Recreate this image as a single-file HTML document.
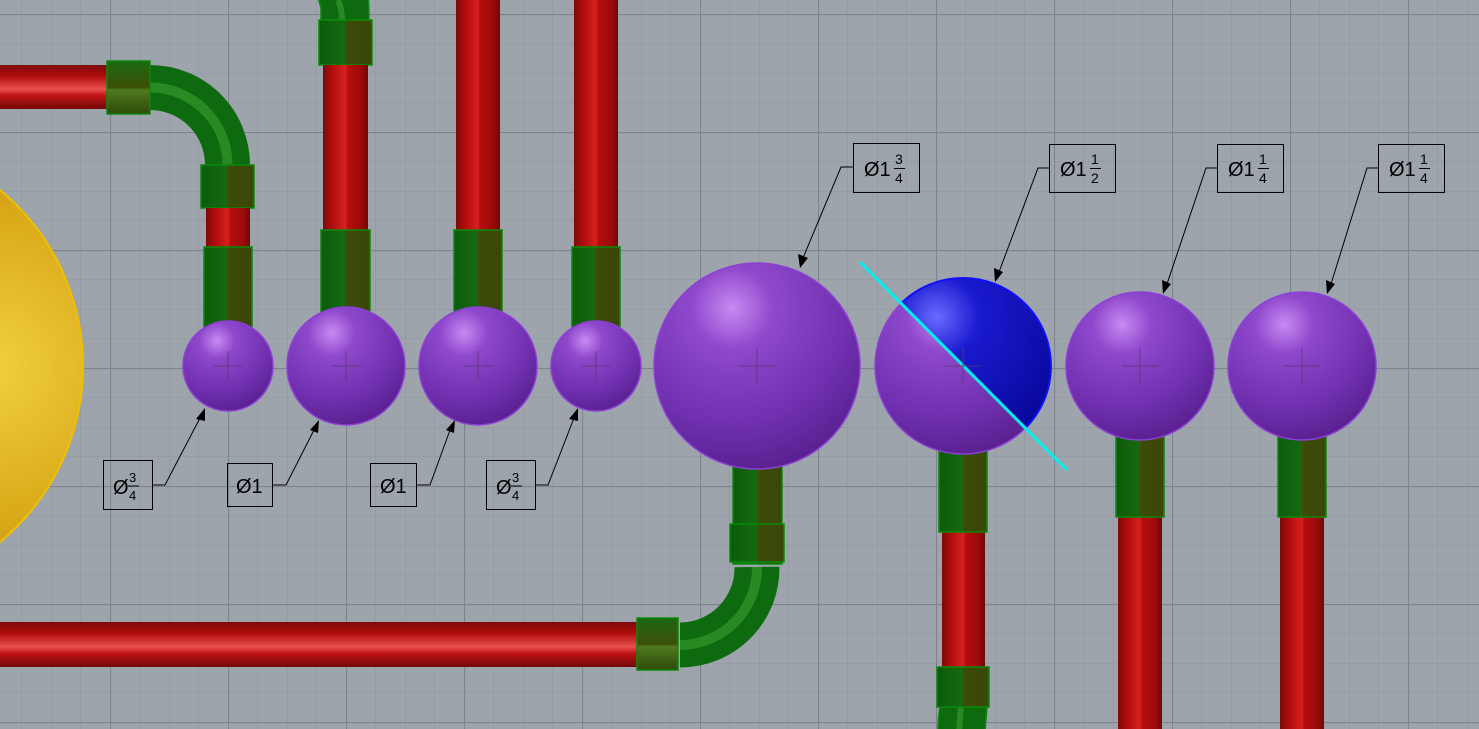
<!DOCTYPE html>
<html><head><meta charset="utf-8"><style>
html,body{margin:0;padding:0;background:#9ea4ac;overflow:hidden}
svg{display:block}
text{font-family:"Liberation Sans",sans-serif;fill:#000}
</style></head><body>
<svg width="1479" height="729" viewBox="0 0 1479 729" xmlns="http://www.w3.org/2000/svg">
<defs>
<pattern id="minor" width="29.5" height="29.5" patternUnits="userSpaceOnUse" x="-8" y="-15.5">
<path d="M0 0H29.5M0 0V29.5" stroke="#8f959e" stroke-width="1" fill="none"/></pattern>
<pattern id="major" width="118" height="118" patternUnits="userSpaceOnUse" x="-8" y="14">
<path d="M0 0.5H118M0.5 0V118" stroke="#7e848c" stroke-width="1.2" fill="none"/></pattern>
<linearGradient id="rv" x1="0" x2="1" y1="0" y2="0">
<stop offset="0" stop-color="#7c0a0a"/><stop offset="0.2" stop-color="#b00c0c"/><stop offset="0.5" stop-color="#d82020"/><stop offset="0.55" stop-color="#b50e0e"/><stop offset="0.85" stop-color="#9a0a0a"/><stop offset="1" stop-color="#700808"/></linearGradient>
<linearGradient id="rh" x1="0" x2="0" y1="0" y2="1">
<stop offset="0" stop-color="#7c0a0a"/><stop offset="0.25" stop-color="#b00c0c"/><stop offset="0.55" stop-color="#e85050"/><stop offset="0.7" stop-color="#c01414"/><stop offset="1" stop-color="#700808"/></linearGradient>
<linearGradient id="gv" x1="0" x2="1" y1="0" y2="0">
<stop offset="0" stop-color="#0c5a0c"/><stop offset="0.5" stop-color="#176a10"/><stop offset="0.5" stop-color="#3d4c08"/><stop offset="1" stop-color="#3a4608"/></linearGradient>
<linearGradient id="gh" x1="0" x2="0" y1="0" y2="1">
<stop offset="0" stop-color="#1a6a10"/><stop offset="0.5" stop-color="#3d5008"/><stop offset="0.55" stop-color="#4e7a20"/><stop offset="1" stop-color="#2e4a08"/></linearGradient>
<radialGradient id="pu" cx="0.38" cy="0.22" r="0.8">
<stop offset="0" stop-color="#c88af2"/><stop offset="0.25" stop-color="#8e48cc"/><stop offset="0.7" stop-color="#7030b0"/><stop offset="1" stop-color="#5a2090"/></radialGradient>
<radialGradient id="bl" cx="0.35" cy="0.22" r="0.8">
<stop offset="0" stop-color="#6a6aff"/><stop offset="0.3" stop-color="#1a1ad0"/><stop offset="1" stop-color="#08089a"/></radialGradient>
<radialGradient id="go" cx="0.8" cy="0.5" r="0.7">
<stop offset="0" stop-color="#f0d040"/><stop offset="0.5" stop-color="#d8a818"/><stop offset="1" stop-color="#9a7010"/></radialGradient>
<clipPath id="rightHalf"><polygon points="860,262 1067,470 1100,470 1100,250"/></clipPath>
</defs>
<rect width="1479" height="729" fill="#9ea4ac"/>
<rect width="1479" height="729" fill="url(#minor)"/>
<rect width="1479" height="729" fill="url(#major)"/>

<circle cx="-145" cy="366" r="228" fill="url(#go)" stroke="#f0c000" stroke-width="2"/>

<!-- top-left run -->
<rect x="0" y="65" width="108" height="44" fill="url(#rh)"/>
<path d="M150 87.5 A77.5 77.5 0 0 1 227.5 165" fill="none" stroke="#0e6a0e" stroke-width="45"/>
<path d="M150 87.5 A77.5 77.5 0 0 1 227.5 165" fill="none" stroke="#38a030" stroke-width="10" opacity="0.6"/>
<rect x="107" y="61" width="43" height="53" fill="url(#gh)" stroke="#0a8a0a" stroke-width="1.5"/>
<rect x="201" y="165" width="53" height="43" fill="url(#gv)" stroke="#0a8a0a" stroke-width="1.5"/>
<rect x="206" y="208" width="44" height="42" fill="url(#rv)"/>
<rect x="204" y="247" width="48" height="81" fill="url(#gv)" stroke="#0a8a0a" stroke-width="1.5"/>
<circle cx="228" cy="366" r="45" fill="url(#pu)" stroke="#8d3fd6" stroke-width="1.5"/>

<!-- pipe 2 -->
<path d="M321 20 L321 8 Q319 0 318 -2 L368 -2 Q369 4 369 20 Z" fill="#0e6a0e" stroke="#0a8a0a" stroke-width="1.5"/>
<path d="M338 0 Q342 8 342 20" stroke="#38a030" stroke-width="6" fill="none" opacity="0.6"/>
<rect x="319" y="20" width="53" height="45" fill="url(#gv)" stroke="#0a8a0a" stroke-width="1.5"/>
<rect x="323" y="65" width="45" height="168" fill="url(#rv)"/>
<rect x="321" y="230" width="49" height="82" fill="url(#gv)" stroke="#0a8a0a" stroke-width="1.5"/>
<circle cx="346" cy="366" r="59" fill="url(#pu)" stroke="#8d3fd6" stroke-width="1.5"/>

<!-- pipe 3 -->
<rect x="456" y="0" width="44" height="233" fill="url(#rv)"/>
<rect x="454" y="230" width="48" height="82" fill="url(#gv)" stroke="#0a8a0a" stroke-width="1.5"/>
<circle cx="478" cy="366" r="59" fill="url(#pu)" stroke="#8d3fd6" stroke-width="1.5"/>

<!-- pipe 4 -->
<rect x="574" y="0" width="44" height="249" fill="url(#rv)"/>
<rect x="572" y="247" width="48" height="81" fill="url(#gv)" stroke="#0a8a0a" stroke-width="1.5"/>
<circle cx="596" cy="366" r="45" fill="url(#pu)" stroke="#8d3fd6" stroke-width="1.5"/>

<!-- big sphere + bottom elbow -->
<rect x="0" y="622" width="640" height="45" fill="url(#rh)"/>
<path d="M680 645 A77 77 0 0 0 757 567" fill="none" stroke="#0e6a0e" stroke-width="45"/>
<path d="M680 645 A77 77 0 0 0 757 567" fill="none" stroke="#38a030" stroke-width="10" opacity="0.6"/>
<rect x="637" y="618" width="41" height="52" fill="url(#gh)" stroke="#0a8a0a" stroke-width="1.5"/>
<rect x="733" y="464" width="49" height="100" fill="url(#gv)" stroke="#0a8a0a" stroke-width="1.5"/>
<rect x="730" y="524" width="54" height="38" fill="url(#gv)" stroke="#0a8a0a" stroke-width="1.5"/>
<circle cx="757" cy="366" r="103" fill="url(#pu)" stroke="#8d3fd6" stroke-width="1.5"/>

<!-- sphere 6 -->
<rect x="942" y="530" width="43" height="140" fill="url(#rv)"/>
<path d="M940 707 L987 707 Q986 718 985 731 L938 731 Q938 718 940 707 Z" fill="#0e6a0e" stroke="#0a8a0a" stroke-width="1.5"/>
<path d="M961 707 Q960 718 959 731" stroke="#38a030" stroke-width="6" fill="none" opacity="0.6"/>
<rect x="937" y="667" width="52" height="40" fill="url(#gv)" stroke="#0a8a0a" stroke-width="1.5"/>
<rect x="939" y="450" width="48" height="82" fill="url(#gv)" stroke="#0a8a0a" stroke-width="1.5"/>
<circle cx="963" cy="366" r="88" fill="url(#pu)" stroke="#8d3fd6" stroke-width="1.5"/>
<circle cx="963" cy="366" r="88" fill="url(#bl)" stroke="#1010ff" stroke-width="2" clip-path="url(#rightHalf)"/>
<line x1="860" y1="262" x2="1067" y2="470" stroke="#00f0f0" stroke-width="3"/>

<!-- sphere 7,8 -->
<rect x="1118" y="515" width="44" height="214" fill="url(#rv)"/>
<rect x="1116" y="436" width="48" height="81" fill="url(#gv)" stroke="#0a8a0a" stroke-width="1.5"/>
<circle cx="1140" cy="366" r="74" fill="url(#pu)" stroke="#8d3fd6" stroke-width="1.5"/>
<rect x="1280" y="515" width="44" height="214" fill="url(#rv)"/>
<rect x="1278" y="436" width="48" height="81" fill="url(#gv)" stroke="#0a8a0a" stroke-width="1.5"/>
<circle cx="1302" cy="366" r="74" fill="url(#pu)" stroke="#8d3fd6" stroke-width="1.5"/>

<g stroke="#5a3a6a" stroke-width="1" opacity="0.8">
<path d="M213 366h30M228 351v30M331 366h30M346 351v30M463 366h30M478 351v30M581 366h30M596 351v30M739 366h36M757 348v36M945 366h36M963 348v36M1122 366h36M1140 348v36M1284 366h36M1302 348v36"/>
</g>

<g fill="none" stroke="#000" stroke-width="1">
<rect x="853.5" y="143.5" width="66" height="49"/>
<rect x="1049.5" y="144.5" width="66" height="48"/>
<rect x="1217.5" y="144.5" width="66" height="48"/>
<rect x="1378.5" y="144.5" width="66" height="48"/>
<rect x="103.5" y="460.5" width="49" height="49"/>
<rect x="227.5" y="463.5" width="45" height="43"/>
<rect x="370.5" y="463.5" width="46" height="43"/>
<rect x="486.5" y="460.5" width="49" height="49"/>
<path d="M853 167H841L803 258M1049 168H1038L999 272M1217 168H1206L1167 284M1378 168H1367L1331 284M152 485H165L200 418M272 485H286L314 430M416 485H430L450 430M535 485H548L574 418"/>
</g>
<g fill="#000">
<polygon points="800,268 798,254 808,258"/>
<polygon points="995,282 994,268 1003,272"/>
<polygon points="1163,294 1162,280 1171,284"/>
<polygon points="1327,294 1326,280 1335,284"/>
<polygon points="205,408 196,419 205,421"/>
<polygon points="319,420 310,430 318,433"/>
<polygon points="455,420 446,430 454,433"/>
<polygon points="578,408 569,419 578,421"/>
</g>
<g font-size="20">
<text x="864" y="176">Ø1</text><text x="895" y="164" font-size="14">3</text><line x1="894" y1="168.5" x2="905" y2="168.5" stroke="#000"/><text x="895" y="183" font-size="14">4</text>
<text x="1060" y="176">Ø1</text><text x="1091" y="164" font-size="14">1</text><line x1="1090" y1="168.5" x2="1101" y2="168.5" stroke="#000"/><text x="1091" y="183" font-size="14">2</text>
<text x="1228" y="176">Ø1</text><text x="1259" y="164" font-size="14">1</text><line x1="1258" y1="168.5" x2="1269" y2="168.5" stroke="#000"/><text x="1259" y="183" font-size="14">4</text>
<text x="1389" y="176">Ø1</text><text x="1420" y="164" font-size="14">1</text><line x1="1419" y1="168.5" x2="1430" y2="168.5" stroke="#000"/><text x="1420" y="183" font-size="14">4</text>
<text x="113" y="494">Ø</text><text x="129" y="482" font-size="13">3</text><line x1="128" y1="486" x2="139" y2="486" stroke="#000"/><text x="129" y="500" font-size="13">4</text>
<text x="236" y="493">Ø1</text>
<text x="380" y="493">Ø1</text>
<text x="496" y="494">Ø</text><text x="512" y="482" font-size="13">3</text><line x1="511" y1="486" x2="522" y2="486" stroke="#000"/><text x="512" y="500" font-size="13">4</text>
</g>
</svg>
</body></html>
